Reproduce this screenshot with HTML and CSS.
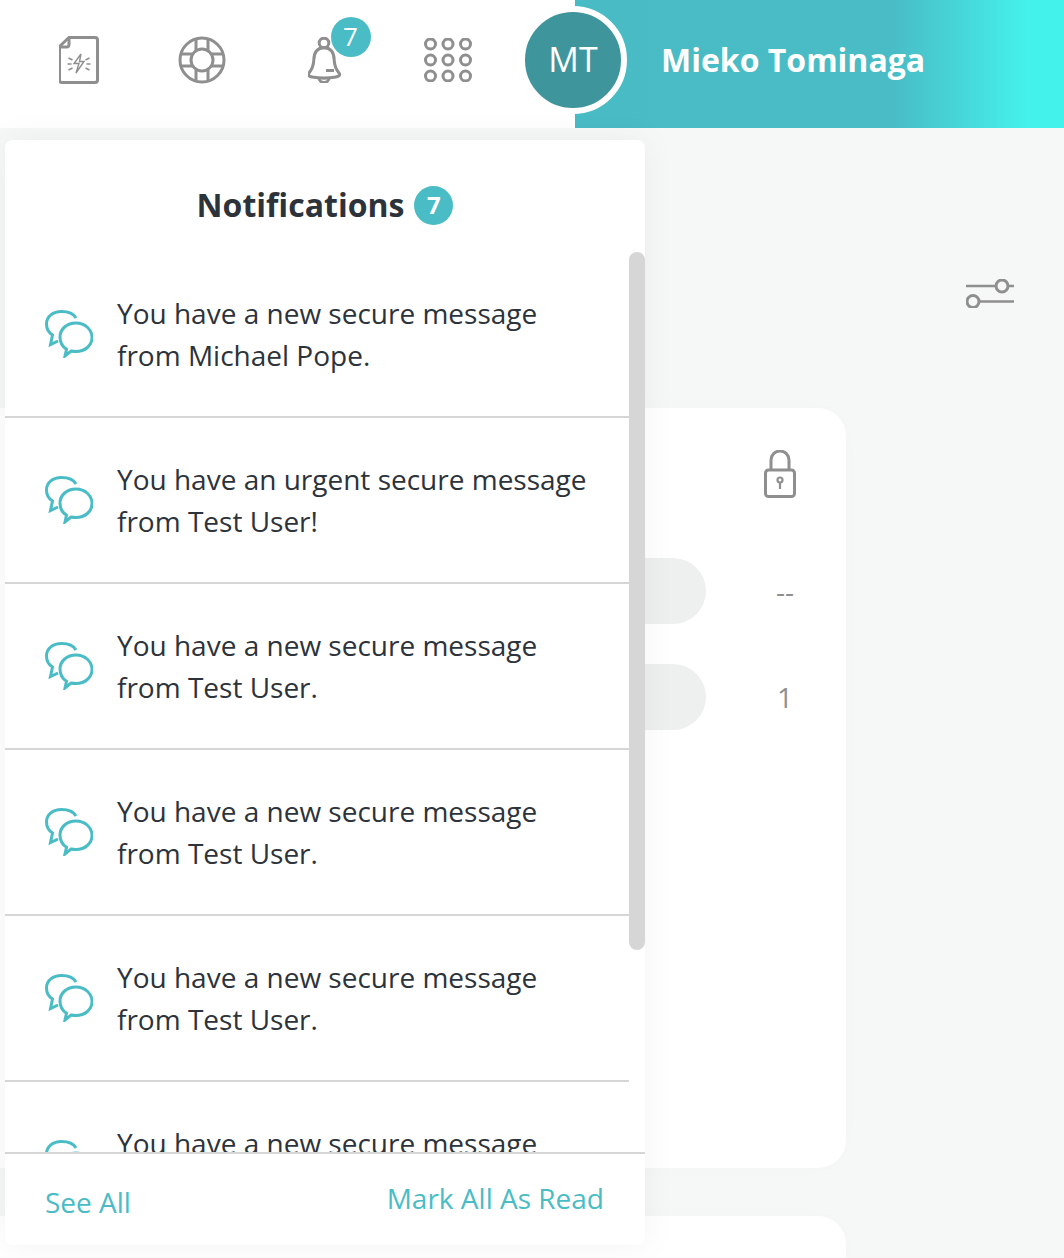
FILE: index.html
```html
<!DOCTYPE html>
<html lang="en">
<head>
    <meta charset="UTF-8">
    <meta name="viewport" content="width=device-width, initial-scale=1.0">
    <title>Notifications</title>
    <link rel="stylesheet" href="styles.css">
</head>
<body>
    <svg class="icon-defs" width="0" height="0" aria-hidden="true">
        <symbol id="chat" viewBox="0 0 48 48">
            <path d="M20 46 L21.5 39.2 C17 36.5 15 32 15 27 C15 19 22 13 31 13 C40 13 47 19.5 47 27.5 C47 35.5 40 41.5 31 41.5 C29 41.5 27.5 41.3 26 41 Z"/>
            <path d="M31 8 C28.5 3.5 23 1.5 16.5 1.5 C8 1.5 1.5 6.5 1.5 14 C1.5 19 3.5 22.5 7.5 25 L5.5 34.5 L13 31"/>
        </symbol>
    </svg>

    <header class="topbar">
        <nav class="topbar-nav">
            <a class="nav-item">
                <svg class="nav-icon" width="40" height="48" viewBox="1 0 40 48">
                    <path d="M11 1.5 H37 a2.5 2.5 0 0 1 2.5 2.5 V44 a2.5 2.5 0 0 1 -2.5 2.5 H4 a2.5 2.5 0 0 1 -2.5 -2.5 V10.500 Z"/>
                    <path d="M11 2 V8.500 a2.500 2.500 0 0 1 -2.500 2.500 H2"/>
                    <path class="thin" d="M23 18 L16 27.500 H21 L18 37 L26 25.500 H21.500 Z"/>
                    <path class="thin" d="M10.500 22 L14.500 24 M9.500 28 H13.500 M10.500 34 L14.500 32 M31.500 22 L27.500 24 M32.500 28 H28.500 M31.500 34 L27.500 32"/>
                </svg>
            </a>
            <a class="nav-item">
                <svg class="nav-icon" width="48" height="48" viewBox="0 0 48 48">
                    <circle cx="24" cy="24" r="22"/>
                    <circle cx="24" cy="24" r="11"/>
                    <path d="M18 2.500 V14 M30 2.500 V14 M18 34 V45.500 M30 34 V45.500 M2.500 18 H14 M2.500 30 H14 M34 18 H45.500 M34 30 H45.500"/>
                </svg>
            </a>
            <a class="nav-item">
                <span class="bell">
                    <svg class="nav-icon" width="34" height="46" viewBox="1 0 34 46">
                        <circle cx="17" cy="6" r="4.800"/>
                        <path d="M17 10.800 C9 10.800 7 17 6.800 23 C6.500 30 4.500 33 2 36 C0.500 38 2 39.500 5 40 C13 41.500 21 41.500 29 40 C32 39.500 33.500 38 32 36 C29.500 33 27.500 30 27.200 23 C27 17 25 10.800 17 10.800 Z"/>
                        <path d="M12 41 a5 4.500 0 0 0 10 0 M19 33.500 H27"/>
                    </svg>
                    <span class="bell-badge">7</span>
                </span>
            </a>
            <a class="nav-item">
                <svg class="nav-icon" width="48" height="44" viewBox="0 0 48 44">
                    <circle cx="6.500" cy="6" r="5"/><circle cx="24" cy="6" r="5"/><circle cx="41.500" cy="6" r="5"/>
                    <circle cx="6.500" cy="22" r="5"/><circle cx="24" cy="22" r="5"/><circle cx="41.500" cy="22" r="5"/>
                    <circle cx="6.500" cy="38" r="5"/><circle cx="24" cy="38" r="5"/><circle cx="41.500" cy="38" r="5"/>
                </svg>
            </a>
        </nav>
        <div class="user-box">
            <div class="avatar">MT</div>
            <div class="user-name">Mieko Tominaga</div>
        </div>
    </header>

    <main class="content">
        <div class="toolbar">
            <svg class="nav-icon" width="48" height="29" viewBox="0 0 48 29">
                <path class="line" d="M0 7 H48 M14 22.500 H48"/>
                <circle class="on-bg" cx="36" cy="7" r="6"/>
                <circle class="on-bg" cx="7" cy="22.500" r="6"/>
            </svg>
        </div>

        <section class="card">
            <div class="card-head">
                <svg class="nav-icon" width="32" height="48" viewBox="0 0 32 48">
                    <path d="M7 20 V10 a9 9 0 0 1 18 0 V20"/>
                    <rect x="1.500" y="20" width="29" height="26.500" rx="3"/>
                    <circle class="thin-2" cx="16" cy="30" r="2.500"/>
                    <path class="thin-2" d="M16 32.500 V39"/>
                </svg>
            </div>
            <div class="card-row"><div class="pill"></div><div class="value">--</div></div>
            <div class="card-row"><div class="pill"></div><div class="value">1</div></div>
        </section>

        <section class="card card-next"></section>
    </main>

    <div class="notif-panel">
        <div class="notif-head">
            <h2>Notifications</h2>
            <span class="notif-count">7</span>
        </div>
        <div class="notif-scroll">
            <ul class="notif-list">
                <li><svg class="chat-icon" width="48" height="48"><use href="#chat"/></svg><p>You have a new secure message<br>from Michael Pope.</p></li>
                <li><svg class="chat-icon" width="48" height="48"><use href="#chat"/></svg><p>You have an urgent secure message<br>from Test User!</p></li>
                <li><svg class="chat-icon" width="48" height="48"><use href="#chat"/></svg><p>You have a new secure message<br>from Test User.</p></li>
                <li><svg class="chat-icon" width="48" height="48"><use href="#chat"/></svg><p>You have a new secure message<br>from Test User.</p></li>
                <li><svg class="chat-icon" width="48" height="48"><use href="#chat"/></svg><p>You have a new secure message<br>from Test User.</p></li>
                <li><svg class="chat-icon" width="48" height="48"><use href="#chat"/></svg><p>You have a new secure message<br>from Test User.</p></li>
            </ul>
            <div class="scrollbar"><div class="scroll-thumb"></div></div>
        </div>
        <div class="notif-foot">
            <a class="see-all">See All</a>
            <a class="mark-read">Mark All As Read</a>
        </div>
    </div>
</body>
</html>
```

FILE: styles.css
```css
* {
    box-sizing: border-box;
}
html, body {
    height: 1258px;
    overflow: hidden;
}
body {
    font-family: "Open Sans", Arial, sans-serif;
    background-color: #f6f8f7;
    color: #2d333a;
    margin: 0;
    position: relative;
}
.icon-defs {
    position: absolute;
}

/* top bar */
.topbar {
    display: flex;
    height: 128px;
    background-color: #fff;
}
.topbar-nav {
    display: flex;
    flex: 0 0 575px;
    padding-left: 17px;
}
.nav-item {
    display: flex;
    width: 123px;
    height: 120px;
    align-items: center;
    justify-content: center;
}
.nav-icon {
    fill: none;
    stroke: #8f8f8f;
    stroke-width: 3;
    display: block;
}
.nav-icon .thin {
    stroke-width: 1.4;
}
.nav-icon .thin-2 {
    stroke-width: 2.2;
}
.nav-icon .line {
    stroke-width: 2.5;
}
.nav-icon .on-bg {
    fill: #f6f8f7;
}
.bell {
    position: relative;
    display: block;
}
.bell-badge {
    position: absolute;
    top: -20px;
    left: 23px;
    width: 40px;
    height: 40px;
    border-radius: 50%;
    background-color: #49bcc6;
    color: #fff;
    font-size: 26px;
    line-height: 38px;
    text-align: center;
}
.user-box {
    flex: 1;
    display: flex;
    align-items: flex-start;
    background: linear-gradient(90deg, #49bbc5 0, #49bcc6 65%, #44f2ec 93%);
    color: #fff;
}
.avatar {
    width: 108px;
    height: 108px;
    margin: 6px 35px 0 -56px;
    border: 6px solid #fff;
    border-radius: 50%;
    background-color: #3f959c;
    font-size: 34px;
    line-height: 94px;
    text-align: center;
}
.user-name {
    font-size: 32px;
    font-weight: 700;
    line-height: 120px;
    margin-left: -1px;
}

/* page behind the dropdown */
.content {
    height: 1130px;
    overflow: hidden;
}
.toolbar {
    display: flex;
    justify-content: flex-end;
    padding: 151px 50px 0 0;
    height: 280px;
}
.card {
    width: 876px;
    height: 760px;
    margin-left: -30px;
    background-color: #fff;
    border-radius: 28px;
    box-shadow: 0 0 40px rgba(0, 0, 0, 0.012);
}
.card-next {
    margin-top: 48px;
}
.card-head {
    display: flex;
    justify-content: flex-end;
    padding: 42px 50px 0 0;
    height: 150px;
}
.card-row {
    display: flex;
    align-items: center;
    height: 66px;
    margin-bottom: 40px;
}
.pill {
    margin-left: 330px;
    width: 406px;
    height: 66px;
    border-radius: 33px;
    background-color: #eef0f0;
}
.value {
    width: 54px;
    margin-left: 52px;
    text-align: center;
    color: #8f8f8f;
    font-size: 28px;
}

/* notifications dropdown */
.notif-panel {
    position: absolute;
    top: 140px;
    left: 5px;
    width: 640px;
    height: 1105px;
    background-color: #fff;
    border-radius: 8px;
    box-shadow: 0 0 36px rgba(0, 0, 0, 0.05);
    display: flex;
    flex-direction: column;
    overflow: hidden;
}
.notif-head {
    display: flex;
    flex: 0 0 112px;
    align-items: center;
    justify-content: center;
    gap: 10px;
    padding-top: 16px;
}
.notif-head h2 {
    margin: 0;
    font-size: 32px;
    font-weight: 700;
}
.notif-count {
    width: 39px;
    height: 39px;
    margin-top: 2px;
    border-radius: 50%;
    background-color: #49bcc6;
    color: #fff;
    font-size: 24px;
    font-weight: 700;
    line-height: 38px;
    text-align: center;
}
.notif-scroll {
    display: flex;
    height: 900px;
    overflow: hidden;
}
.notif-list {
    flex: 1;
    list-style: none;
    margin: 0;
    padding: 0;
}
.notif-list li {
    display: flex;
    align-items: center;
    height: 166px;
    padding-left: 40px;
    gap: 24px;
    border-bottom: 2px solid #d6d6d6;
}
.notif-list p {
    margin: 0;
    font-size: 28px;
    line-height: 42px;
}
.chat-icon {
    fill: none;
    stroke: #49bcc6;
    stroke-width: 3;
    flex: none;
}
.scrollbar {
    flex: 0 0 16px;
}
.scroll-thumb {
    height: 698px;
    border-radius: 8px;
    background-color: #d6d6d6;
}
.notif-foot {
    flex: 1;
    display: flex;
    justify-content: space-between;
    padding: 25px 41px 0 40px;
    border-top: 2px solid #d6d6d6;
    color: #49bcc6;
    font-size: 28px;
    line-height: 38px;
}
.see-all {
    margin-top: 4px;
}
```
